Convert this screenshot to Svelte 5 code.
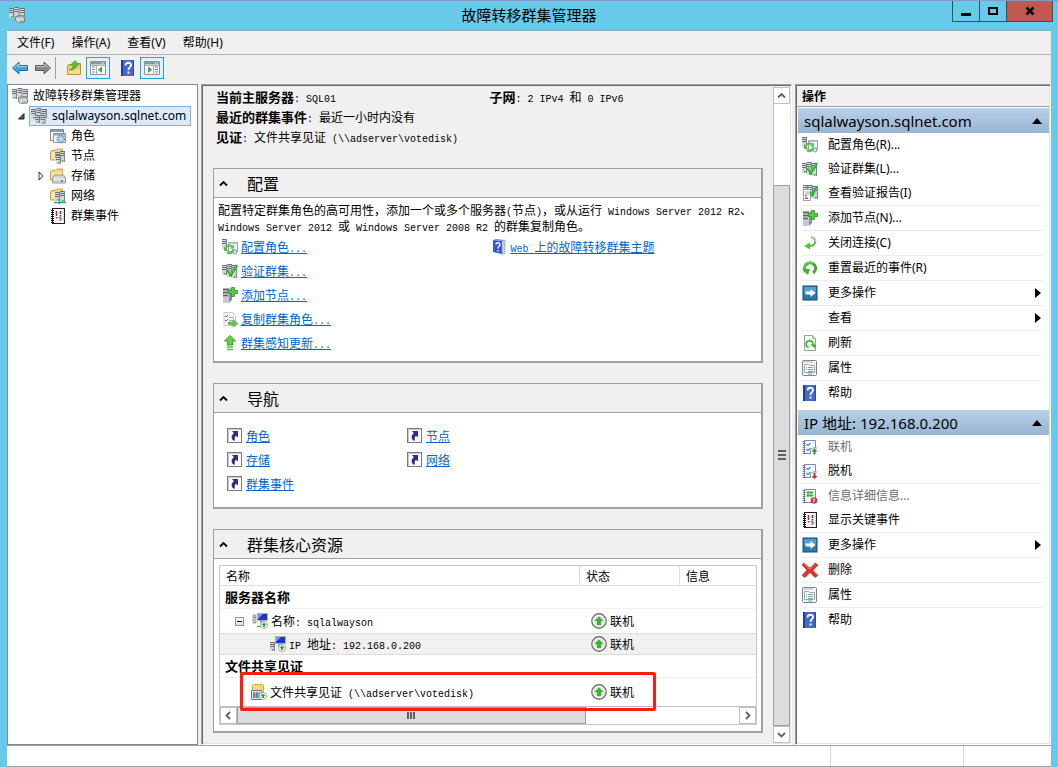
<script>
  const menus = ["文件(F)", "操作(A)", "查看(V)", "帮助(H)"];

  const tree = [
    { label: "角色", icon: "roles" },
    { label: "节点", icon: "nodes" },
    { label: "存储", icon: "storage", closed: true },
    { label: "网络", icon: "networks" },
    { label: "群集事件", icon: "events" },
  ];

  const configLinks = [
    { label: "配置角色...", icon: "configRole" },
    { label: "验证群集...", icon: "validate" },
    { label: "添加节点...", icon: "addNode" },
    { label: "复制群集角色...", icon: "copyRole" },
    { label: "群集感知更新...", icon: "update" },
  ];

  const navLinks = ["角色", "节点", "存储", "网络", "群集事件"];

  const actions = [
    {
      title: "sqlalwayson.sqlnet.com",
      items: [
        { label: "配置角色(R)...", icon: "configRole" },
        { label: "验证群集(L)...", icon: "validate" },
        { label: "查看验证报告(I)", icon: "report", line: true },
        { label: "添加节点(N)...", icon: "addNode", line: true },
        { label: "关闭连接(C)", icon: "disconnect", line: true },
        { label: "重置最近的事件(R)", icon: "reset", line: true },
        { label: "更多操作", icon: "more", line: true, sub: true },
        { label: "查看", icon: "", line: true, sub: true },
        { label: "刷新", icon: "refresh", line: true },
        { label: "属性", icon: "properties", line: true },
        { label: "帮助", icon: "help" },
      ],
    },
    {
      title: "IP 地址: 192.168.0.200",
      items: [
        { label: "联机", icon: "online", disabled: true },
        { label: "脱机", icon: "offline", line: true },
        { label: "信息详细信息...", icon: "details", disabled: true },
        { label: "显示关键事件", icon: "events", line: true },
        { label: "更多操作", icon: "more", line: true, sub: true },
        { label: "删除", icon: "remove", line: true },
        { label: "属性", icon: "properties", line: true },
        { label: "帮助", icon: "help" },
      ],
    },
  ];
</script>

{#snippet mixed(text)}{#each text.split(/([\x20-\x7e]+)/) as part, i}{#if i % 2}<span class="latin">{part}</span>{:else}{part}{/if}{/each}{/snippet}

{#snippet tower(x, y, h)}
  <rect {x} {y} width="5" height={h} fill="#d3d6d8" />
  <path d="M{x + 4} {y}h1v{h}h-1z" fill="#7c8387" />
  <path d="M{x} {y + 0.5}h4M{x} {y + 2.5}h4M{x} {y + 4.5}h4" stroke="#5d656b" stroke-width=".9" />
  <rect x={x + 2} y={y + h - 2} width="1.5" height="1.5" fill="#35b52e" />
{/snippet}

{#snippet badge(x, y, color)}
  <circle cx={x} cy={y} r="3.6" fill="#f4f6f4" stroke="#98a19a" stroke-width=".8" />
  <path d="M{x} {y - 2.6}l2.6 2.6h-1.5v2h-2.2v-2h-1.5z" fill={color} />
{/snippet}

{#snippet icon(name)}
  <svg class="icon" viewBox="0 0 16 16" width="16" height="16" aria-hidden="true">
    {#if name === "cluster" || name === "root"}
      {@render tower(0, 1, 10)}
      {@render tower(5.5, 0, 11)}
      {@render tower(11, 1, 9)}
      {#if name === "root"}
        <path d="M6.500 9.500l6-1 3 2.500v4l-7 .5-2-2z" fill="#b9bfc3" stroke="#646b70" stroke-width=".8" />
        <path d="M7 10.500l2 2 6-1M9 12.500v3" fill="none" stroke="#eef1f2" />
      {:else}
        {@render tower(4, 7, 8)}
        {@render tower(9.5, 7, 9)}
      {/if}
    {:else if name === "roles"}
      <path d="M.5 1.500h13v11H.5z" fill="#f7f9fa" stroke="#7d878f" />
      <path d="M1 2h12v2H1z" fill="#8f9ba5" />
      <path d="M3.500 5.500h12v9h-12z" fill="#eef3f7" stroke="#8d979f" />
      <path d="M4 6h11v1.500H4z" fill="#9aa7b1" />
      <circle cx="11" cy="11" r="3.500" fill="#cfe2f1" stroke="#6c9cc4" stroke-width="2" stroke-dasharray="1.500 .8" />
      <circle cx="11" cy="11" r="1.500" fill="#fff" stroke="#6c9cc4" stroke-width=".7" />
    {:else if name === "nodes" || name === "networks" || name === "storage"}
      <path d="M.5 3.500l1-1H5L6.500 1h6v11H.5z" fill="#f3d77c" stroke="#c9a348" />
      <path d="M1.500 4.500h10v6.500h-10z" fill="#fae9a6" />
      {#if name === "storage"}
        <path d="M2.500 10l2-3h9l2 3v5h-13z" fill="#cfd4d7" stroke="#81898e" stroke-width=".8" />
        <path d="M3 11h12" stroke="#f5f7f8" />
        <rect x="11" y="12" width="2" height="2" fill="#36b52f" />
      {:else}
        {@render tower(5, 4, 9)}
        {@render tower(10, 3, 11)}
        {#if name === "networks"}
          <path d="M4 14.500h12M9.500 13v3" stroke="#2fa39a" stroke-width="1.600" />
        {:else}
          {@render tower(6, 7, 9)}
        {/if}
      {/if}
    {:else if name === "events"}
      <rect x="2.500" y=".5" width="12" height="15" fill="#fff" stroke="#222" />
      <path d="M2.500 2v13" stroke="#111" stroke-width="3" stroke-dasharray="1 1" />
      <path d="M6.500 3v5M6.500 9v1.500" stroke="#dc1d1d" stroke-width="1.600" />
      <path d="M10.500 3v3M10.500 7v1.500" stroke="#263bb8" stroke-width="1.600" />
      <path d="M8.500 10c2.500-1 4 .5 1.500 2v1" fill="none" stroke="#c9366c" stroke-width="1.200" />
      <path d="M13.500 2v12" stroke="#b6b6b6" stroke-dasharray="1 1" />
    {:else if name === "configRole"}
      {@render tower(0, 0, 10)}
      <path d="M6.500 3.500h9v9h-9z" fill="#edf3f5" stroke="#93a2aa" />
      <path d="M6 4h9" stroke="#aab9c0" stroke-width="1.500" />
      <path d="M4 9.500a3.500 3.500 0 0 1 6-2M11 10a3.500 3.500 0 0 1-6 3" fill="none" stroke="#58bd57" stroke-width="2" />
      <path d="M2 7v5h4.500zM12 5.500v4H8z" fill="#58bd57" />
      <circle cx="13" cy="13" r="2" fill="#dbe8f2" stroke="#7597b4" />
    {:else if name === "validate"}
      {@render tower(0, 2, 10)}
      {@render tower(5, 1, 13)}
      {@render tower(10, 2, 13)}
      <path d="M5.500 7l3.500 4.500 6-9.500" fill="none" stroke="#2cae28" stroke-width="2.800" />
      <path d="M6 7l3 3.500L14 3" fill="none" stroke="#8be277" stroke-width=".8" />
    {:else if name === "report"}
      {@render tower(1, 0, 6)}
      {@render tower(6, 0, 12)}
      {@render tower(11, 1, 13)}
      <path d="M1.500 4.500h7v11h-7z" fill="#fff" stroke="#9aa1a5" />
      <path d="M3 7h4M3 9h4" stroke="#9da5aa" />
      <path d="M3 10h1.500v1.500H3zM3 12.500h3V14H3z" fill="#d94836" />
      <path d="M8 7l2.500 3.500L14.500 2" fill="none" stroke="#35b82f" stroke-width="2.200" />
    {:else if name === "addNode"}
      <path d="M1 1h8v13l-3 2H1z" fill="#c6cacd" />
      <path d="M7 3l3-1v11l-3 3z" fill="#8b9297" />
      <path d="M1 2.500h6M1 5.500h6M1 8.500h5" stroke="#5a6369" stroke-width="1.400" />
      <path d="M9.500.5h3v3h3v3h-3v3h-3v-3h-3v-3h3z" fill="#54cf3f" stroke="#25941f" stroke-width=".8" />
    {:else if name === "copyRole"}
      <path d="M2 1.500h8.500l3 3v10H2z" fill="#f8fafb" stroke="#c6ccd0" />
      <path d="M3 5l1 1 2-2M3 9l1 1 2-2" fill="none" stroke="#316dbd" />
      <path d="M7 6.500h5M7 9.500h4" stroke="#a9b3bb" />
      <path d="M6.500 11h4.500V8.500l5 4-5 3.500v-2.500H6.500z" fill="#5fc84c" stroke="#379c2f" stroke-width=".5" />
    {:else if name === "update"}
      <path d="M8 .5L13.500 6H10.500v4H5.500V6H2.500z" fill="#65ce46" stroke="#399e2b" />
      <path d="M5 12h6M5 14.500h6" stroke="#58bd3e" stroke-width="1.500" />
    {:else if name === "disconnect"}
      <path d="M9 2c6 1 6 9-2 9" fill="none" stroke="#52bf39" stroke-width="2" />
      <path d="M2 11l6-3.500v7z" fill="#4fc538" />
      <path d="M9 2c3 0 5 2 4.500 5" fill="none" stroke="#b4eba5" />
    {:else if name === "reset"}
      <path d="M4 12A5.500 5.500 0 1 1 11 13" fill="none" stroke="#3eab31" stroke-width="3" />
      <path d="M3 8.500A5 5 0 0 1 11 3.500" fill="none" stroke="#93dc78" />
      <path d="M0 9h8l-2 6z" fill="#43b134" />
    {:else if name === "more"}
      <rect x="1" y="1" width="14" height="14" fill="#2b79ae" stroke="#164b78" />
      <path d="M2 2h12v5.500H2z" fill="#51a0cf" />
      <path d="M3.500 6.500h5V4l5 4-5 4V9.500h-5z" fill="#fff" />
    {:else if name === "refresh"}
      <path d="M2.500.5h8l3 3v12h-11z" fill="#f8faf8" stroke="#999f9a" />
      <path d="M10.500.5v3h3" fill="#d9dddb" stroke="#a8aeaa" />
      <path d="M6.500 12.500A3.500 3.500 0 1 1 11 10" fill="none" stroke="#4eb83d" stroke-width="2" />
      <path d="M8 9.500h5.500v4z" fill="#43ad34" />
    {:else if name === "properties"}
      <rect x=".5" y=".5" width="14" height="15" rx="1" fill="#f3f5f7" stroke="#7d858c" />
      <path d="M1 2h10" stroke="#b6bdc3" />
      <path d="M2.500 4.500h4l1 1h5v7h-10z" fill="#fff" stroke="#9ca6ae" />
      <path d="M6 7.500h5M6 9.500h5M6 11.500h5" stroke="#8d99a3" />
      <path d="M4 7.500h1M4 9.500h1M6 14h4" stroke="#3fb6df" />
    {:else if name === "help"}
      <path d="M1 0h13v16H1z" fill="#4668c8" />
      <path d="M1 0h2v16H1z" fill="#243e91" />
      <path d="M13.500 0v16" stroke="#2d489d" />
      <path d="M5.500 5.500c.3-3.700 5.500-3.500 5.500-.5C11 7.300 8.500 7 8.500 10" fill="none" stroke="#fff" stroke-width="1.800" />
      <rect x="7.500" y="11.500" width="2" height="2" fill="#fff" />
    {:else if name === "web"}
      <path d="M1 1l9 1v13l-9-2z" fill="#3158ce" />
      <path d="M10 2l3-1v13l-3 1.500z" fill="#cbd4ee" stroke="#8092c5" stroke-width=".6" />
      <path d="M1 1l3-1 9 1-3 1z" fill="#6e8ee5" />
      <path d="M4 5.500c0-2.500 4-2 4 0C8 7.500 6 7 6 9.500M6 11v1.500" fill="none" stroke="#fff" stroke-width="1.400" />
    {:else if name === "online" || name === "offline" || name === "details"}
      <path d="M2.500 1.500h11v13h-11z" fill="#f9fafc" stroke="#7788ae" />
      <path d="M2 2v13" stroke="#68717c" stroke-width="2.500" stroke-dasharray="1 1" />
      {#if name === "details"}
        <path d="M6 3v6M9 3v6M4.500 4.500h7M4.500 7.500h7" stroke="#3bb33a" stroke-width="1.300" />
        <circle cx="12" cy="12.500" r="3.300" fill="#cb3637" />
        <path d="M12 10.500v2.500M12 13.500v1" stroke="#fff" stroke-width="1.300" />
      {:else}
        <path d="M4.500 5L6 6.500 8.500 4M4.500 10L6 11.500 8.500 9" fill="none" stroke="#4e94c9" stroke-width="1.300" />
        <path d="M9 9h7v7H9z" fill="#fff" />
        <path d="M8.500 15v-4l2-2H15" fill="none" stroke="#8d969c" />
        {#if name === "online"}
          <path d="M12.500 9.500l3 3h-2v3h-2v-3h-2z" fill="#26902c" />
        {:else}
          <path d="M12.500 16l3-3h-2v-3h-2v3h-2z" fill="#d02424" />
        {/if}
      {/if}
    {:else if name === "remove"}
      <path d="M2 1l6 5 5-5 3 2-5 5.500 5 5-3 2-5-5-5 5-3-2 5-5.500L0 3z" fill="#d9372e" stroke="#b8261f" stroke-width=".6" />
      <path d="M2 2l6 5 5-5" fill="none" stroke="#f4887d" />
    {:else if name === "shortcut"}
      <rect x=".5" y=".5" width="14" height="14" fill="#fff" stroke="#7c7c7c" />
      <path d="M1.500 14V1.500H14" fill="none" stroke="#c9c9d4" />
      <path d="M5 3h6v6.500L9.300 8C7.500 8.500 7.500 10 8 12.500H6C3.800 9.500 4.500 7 6.800 5.300z" fill="#352d8e" />
    {:else if name === "name" || name === "ip"}
      {#if name === "ip"}
        {@render tower(0, 6, 9)}
      {:else}
        <rect x="1" y="2" width="3" height="8" fill="#c0c6ca" stroke="#80888d" stroke-width=".7" />
        <rect x="2" y="4" width="2" height="1" fill="#4caf48" />
        <path d="M5 13.500h6" stroke="#697177" />
      {/if}
      <path d="M5.500.5h10v7h-10z" fill="#1c36c8" stroke="#a9b3bd" />
      <path d="M6 1h5L6 6z" fill="#7895f2" />
      <path d="M8 8h4v3H8z" fill="#9aa2a8" />
      {@render badge(12, 12, "#3aaa35")}
    {:else if name === "share"}
      <path d="M1.500 1.500l1-1h9l1 1v11h-11z" fill="#f6da79" stroke="#d0ad4a" />
      <path d="M.5 6.500h10v9H.5z" fill="#e7edf0" stroke="#68747c" />
      <path d="M2 8.500h7v5.500H2z" fill="#9fb4bd" />
      <path d="M2 9h7M2 11h7M2 13h7" stroke="#2f5f78" stroke-dasharray="2 1" />
      {@render badge(12, 12, "#3aaa35")}
    {:else if name === "up"}
      <circle cx="8" cy="8" r="7.200" fill="#dfe1df" stroke="#747874" stroke-width="1.400" />
      <circle cx="8" cy="8" r="5.700" fill="none" stroke="#fff" />
      <path d="M8 3.500L12.500 8H10v4H6V8H3.500z" fill="#37b52b" />
    {:else if name === "back" || name === "forward"}
      {#if name === "back"}
        <path d="M.5 8L7 2v3.500h8.500v5H7V14z" fill="#39a5e4" stroke="#176ca9" />
        <path d="M2 8l4.500-4v2.500H15" fill="none" stroke="#a5dbf7" />
      {:else}
        <path d="M15.500 8L9 2v3.500H.5v5H9V14z" fill="#898989" stroke="#5b5b5b" />
        <path d="M1 6.500h9V4l4 4" fill="none" stroke="#c0c0c0" />
      {/if}
    {:else if name === "folderUp"}
      <path d="M1.500 5.500l1-1H8l1-1h5.500v11h-13z" fill="#edc865" stroke="#bd923d" />
      <path d="M2 9h12v5H2z" fill="#f6dc8c" />
      <path d="M3 10c4-1 4-3 4-5H4.500L9 .5 13 5h-2.500c0 3-3 5.500-7.500 5z" fill="#5cbd3d" stroke="#358e27" stroke-width=".6" />
    {:else if name === "paneLeft" || name === "paneRight"}
      <path d="M.5 1.500h15v13H.5z" fill="#fff" stroke="#8b949b" />
      <path d="M1 2h14v2.500H1z" fill="#8b969e" />
      <path d="M11 3h1M13 3h1" stroke="#fff" />
      {#if name === "paneLeft"}
        <path d="M2 7h3M2 9.500h3M2 12h3" stroke="#6583a3" />
        <path d="M6.500 5v9M1 5.500h14" stroke="#a9b2b8" />
        <path d="M12 6.500v6.500L8 9.800z" fill="#38a932" />
      {:else}
        <path d="M11 7h3M11 9.500h3M11 12h3" stroke="#6583a3" />
        <path d="M9.500 5v9M1 5.500h14" stroke="#a9b2b8" />
        <path d="M4 6.500v6.500l4-3.200z" fill="#38a932" />
      {/if}
    {/if}
  </svg>
{/snippet}

{#snippet chevron(d)}
  <svg viewBox="0 0 9 9" width="9" height="9" aria-hidden="true"><path {d} fill="none" stroke="currentColor" stroke-width="1.800" /></svg>
{/snippet}

{#snippet sectionHead(title)}
  <h2>
    <button aria-expanded="true">{@render chevron("M1 6.500L4.500 3 8 6.500")}{title}</button>
  </h2>
{/snippet}

<div class="window">
  <header class="titlebar">
    <div class="app-icon">{@render icon("root")}</div>
    <h1>故障转移群集管理器</h1>
    <div class="window-buttons">
      <button aria-label="最小化"><svg viewBox="0 0 12 12" width="12" height="12"><path d="M1 8h10v3H1z" /></svg></button>
      <button aria-label="最大化"><svg viewBox="0 0 12 12" width="12" height="12"><path d="M2 3h8v6H2z" fill="none" stroke="#000" stroke-width="2" /></svg></button>
      <button class="close" aria-label="关闭"><svg viewBox="0 0 12 12" width="12" height="12"><path d="M2.500 2.500l7 7M9.500 2.500l-7 7" stroke="#000" stroke-width="2.500" /></svg></button>
    </div>
  </header>

  <div class="client">
    <nav class="menubar">
      {#each menus as menu}
        <button>{menu}</button>
      {/each}
    </nav>

    <div class="toolbar">
      <button aria-label="后退">{@render icon("back")}</button>
      <button aria-label="前进">{@render icon("forward")}</button>
      <span class="divider"></span>
      <button aria-label="上一级">{@render icon("folderUp")}</button>
      <button class="pressed" aria-label="显示控制台树">{@render icon("paneLeft")}</button>
      <button class="spaced" aria-label="帮助">{@render icon("help")}</button>
      <button class="pressed" aria-label="显示操作窗格">{@render icon("paneRight")}</button>
    </div>

    <div class="panes">
      <nav class="tree">
        <button class="node root">{@render icon("root")}故障转移群集管理器</button>
        <div class="branch">
          <span class="twisty"><svg viewBox="0 0 8 8" width="8" height="8"><path d="M7 1.500v5.500H1.500z" fill="#555" stroke="#222" /></svg></span>
          <button class="node selected">{@render icon("cluster")}sqlalwayson.sqlnet.com</button>
        </div>
        {#each tree as item}
          <div class="branch leaf">
            <span class="twisty">
              {#if item.closed}
                <svg viewBox="0 0 8 10" width="8" height="10"><path d="M2 1l4 4-4 4z" fill="#fff" stroke="#333" /></svg>
              {/if}
            </span>
            <button class="node">{@render icon(item.icon)}{item.label}</button>
          </div>
        {/each}
      </nav>

      <main class="details sunken">
        <div class="content">
          <div class="summary">
            <p><b>当前主服务器</b>{@render mixed(": SQL01")}</p>
            <p><b>子网</b>{@render mixed(": 2 IPv4 和 0 IPv6")}</p>
            <p class="wide"><b>最近的群集事件</b>{@render mixed(": 最近一小时内没有")}</p>
            <p class="wide"><b>见证</b>{@render mixed(": 文件共享见证 (\\\\adserver\\votedisk)")}</p>
          </div>

          <section>
            {@render sectionHead("配置")}
            <div class="config">
              <p>
                {@render mixed("配置特定群集角色的高可用性，添加一个或多个服务器(节点)，或从运行 Windows Server 2012 R2、")}<br />
                {@render mixed("Windows Server 2012 或 Windows Server 2008 R2 的群集复制角色。")}
              </p>
              <div class="columns">
                <ul>
                  {#each configLinks as link}
                    <li>{@render icon(link.icon)}<a href="#config">{@render mixed(link.label)}</a></li>
                  {/each}
                </ul>
                <ul>
                  <li>{@render icon("web")}<a href="#web">{@render mixed("Web 上的故障转移群集主题")}</a></li>
                </ul>
              </div>
            </div>
          </section>

          <section>
            {@render sectionHead("导航")}
            <ul class="navigate">
              {#each navLinks as link}
                <li>{@render icon("shortcut")}<a href="#nav">{link}</a></li>
              {/each}
            </ul>
          </section>

          <section>
            {@render sectionHead("群集核心资源")}
            <div class="resources">
              <table>
                <colgroup>
                  <col />
                  <col class="status-col" />
                  <col class="info-col" />
                </colgroup>
                <thead>
                  <tr><th>名称</th><th>状态</th><th>信息</th></tr>
                </thead>
                <tbody>
                  <tr class="group"><th colspan="3">服务器名称</th></tr>
                  <tr class="resource">
                    <td>
                      <div class="cell level-1">
                        <button class="collapse" aria-label="折叠"></button>
                        {@render icon("name")}<span>{@render mixed("名称: sqlalwayson")}</span>
                      </div>
                    </td>
                    <td><div class="cell">{@render icon("up")}联机</div></td>
                    <td></td>
                  </tr>
                  <tr class="resource current">
                    <td><div class="cell level-2">{@render icon("ip")}<span>{@render mixed("IP 地址: 192.168.0.200")}</span></div></td>
                    <td><div class="cell">{@render icon("up")}联机</div></td>
                    <td></td>
                  </tr>
                  <tr class="group"><th colspan="3">文件共享见证</th></tr>
                  <tr class="resource witness">
                    <td><div class="cell level-share">{@render icon("share")}<span>{@render mixed("文件共享见证 (\\\\adserver\\votedisk)")}</span></div></td>
                    <td><div class="cell">{@render icon("up")}联机</div></td>
                    <td></td>
                  </tr>
                </tbody>
              </table>
              <div class="hscroll">
                <span class="arrow">{@render chevron("M6 1L2.500 4.500 6 8")}</span>
                <span class="thumb"><i class="grip"></i></span>
                <span class="track"></span>
                <span class="arrow">{@render chevron("M3 1l3.500 3.500L3 8")}</span>
              </div>
              <div class="highlight"></div>
            </div>
          </section>
        </div>

        <div class="vscroll">
          <span class="arrow">{@render chevron("M1 6.500L4.500 3 8 6.500")}</span>
          <span class="track"></span>
          <span class="thumb"><i class="grip"></i></span>
          <span class="arrow">{@render chevron("M1 3l3.500 3.500L8 3")}</span>
        </div>
      </main>

      <aside class="actions sunken">
        <h2>操作</h2>
        {#each actions as group}
          <h3>
            <button aria-expanded="true">
              {group.title}
              <svg viewBox="0 0 10 6" width="10" height="6"><path d="M5 0l5 6H0z" /></svg>
            </button>
          </h3>
          <ul>
            {#each group.items as item}
              <li class:line={item.line}>
                <button disabled={item.disabled}>
                  {@render icon(item.icon)}
                  <span>{item.label}</span>
                  {#if item.sub}
                    <svg viewBox="0 0 6 10" width="6" height="10"><path d="M0 0l6 5-6 5z" /></svg>
                  {/if}
                </button>
              </li>
            {/each}
          </ul>
        {/each}
      </aside>
    </div>

    <footer class="statusbar"><span></span><span></span><span></span></footer>
  </div>
</div>

<style>
  :global(body) {
    margin: 0;
  }

  .window,
  .window * {
    box-sizing: border-box;
  }

  .window {
    display: flex;
    flex-direction: column;
    min-height: 100vh;
    padding: 0 7px;
    border-top: 1px solid #7f9dc4;
    background: #67caea;
    color: #000;
    font-family: "Noto Sans", "Noto Sans CJK SC", sans-serif;
    font-size: 12px;
    line-height: 20px;
  }

  h1,
  h2,
  h3,
  p,
  ul {
    margin: 0;
    padding: 0;
    font-weight: normal;
    list-style: none;
  }

  button {
    display: flex;
    align-items: center;
    margin: 0;
    padding: 0;
    border: none;
    background: none;
    color: inherit;
    font: inherit;
    text-align: left;
    white-space: nowrap;
  }

  svg {
    display: block;
    flex: none;
  }

  .titlebar {
    display: grid;
    grid-template-columns: 1fr auto 1fr;
    height: 29px;
  }

  .app-icon {
    padding: 6px 2px;
  }

  .titlebar h1 {
    font-size: 15px;
    line-height: 28px;
  }

  .window-buttons {
    display: flex;
    justify-content: flex-end;
    height: 21px;
    margin-right: -2px;
  }

  .window-buttons button {
    justify-content: center;
    width: 27px;
    border: 1px solid #31525e;
    border-top: none;
    border-right: none;
  }

  .window-buttons .close {
    width: 47px;
    border-right: 1px solid #31525e;
    background: #c15850;
  }

  .client {
    display: flex;
    flex: 1;
    flex-direction: column;
    border-top: 1px solid #8aa9b8;
    background: #f0f0f0;
  }

  .menubar {
    display: flex;
    gap: 17px;
    height: 24px;
    padding: 0 10px;
    border-bottom: 1px solid #b0b0b0;
  }

  .toolbar {
    display: flex;
    align-items: center;
    gap: 1px;
    height: 29px;
    padding: 0 2px 4px;
  }

  .toolbar button {
    justify-content: center;
    width: 22px;
    height: 22px;
  }

  .toolbar .divider {
    height: 22px;
    margin-right: 6px;
    border-left: 1px solid #a0a0a0;
  }

  .toolbar .pressed {
    width: 24px;
    border: 1px solid #26a0da;
    background: #e4f1fa;
  }

  .toolbar .spaced {
    margin-left: 6px;
  }

  .panes {
    display: grid;
    flex: 1;
    grid-template-columns: 191px minmax(0, 1fr) 256px;
    gap: 3px;
  }

  .tree {
    padding: 1px 4px;
    border: 1px solid #828790;
    background: #fff;
  }

  .node {
    gap: 5px;
    height: 20px;
    border: 1px solid transparent;
  }

  .node.root {
    border: none;
  }

  .branch {
    display: flex;
    align-items: center;
  }

  .twisty {
    display: flex;
    justify-content: center;
    width: 17px;
  }

  .node.selected {
    padding: 0 4px 0 1px;
    border-color: #84acdd;
    background: #dcebfc;
  }

  .leaf {
    padding-left: 20px;
  }

  .sunken {
    border: 1px solid #a0a0a0;
    border-right-color: #fff;
    border-bottom-color: #fff;
    box-shadow: inset 1px 1px #696969, inset -1px -1px #e3e3e3;
  }

  .details {
    display: flex;
    padding: 2px 1px 1px 2px;
    font-family: "Noto Sans CJK SC", sans-serif;
  }

  /* half-width letters next to 12px ideographs */
  .latin {
    font-family: "Liberation Mono", monospace;
    font-size: 10px;
    line-height: 0;
    white-space: pre;
  }

  .content {
    display: flex;
    flex: 1;
    flex-direction: column;
    gap: 20px;
    min-width: 0;
    padding: 0 10px 8px 9px;
  }

  .summary {
    display: grid;
    grid-template-columns: 1fr 1fr;
    padding: 0 0 1px 3px;
  }

  .summary .wide {
    grid-column: 1 / -1;
  }

  .summary b {
    font-size: 13px;
    line-height: 0;
  }

  section {
    border: 1px solid #a0a0a0;
    border-right-width: 2px;
    border-bottom-width: 2px;
    background: #fff;
  }

  section h2 {
    height: 29px;
    border-bottom: 1px solid #a0a0a0;
    background: #f0f0f0;
    font-size: 16px;
  }

  section h2 button {
    gap: 19px;
    width: 100%;
    height: 28px;
    padding-left: 5px;
  }

  .config {
    padding: 4px 4px 6px;
  }

  .config p {
    margin-bottom: 1px;
    line-height: 16px;
    white-space: nowrap;
  }

  .columns {
    display: grid;
    grid-template-columns: 1fr 1fr;
  }

  section li {
    display: flex;
    align-items: center;
    gap: 3px;
    height: 24px;
    padding-left: 4px;
  }

  a {
    color: #0066cc;
    text-decoration: underline;
  }

  .navigate {
    display: grid;
    grid-template-columns: 180px 180px;
    padding: 11px 9px;
  }

  .resources {
    position: relative;
    margin: 6px 4px 6px 5px;
    border: 1px solid #c8c8c8;
  }

  table {
    width: 100%;
    table-layout: fixed;
    border-collapse: separate;
    border-spacing: 0;
  }

  .status-col {
    width: 100px;
  }

  .info-col {
    width: 76px;
  }

  th,
  td {
    padding: 0;
    text-align: left;
  }

  thead th {
    height: 20px;
    padding-left: 6px;
    border-right: 1px solid #dedede;
    border-bottom: 1px solid #dedede;
    font-weight: normal;
    line-height: 19px;
  }

  thead th:last-child {
    border-right: none;
  }

  .group th {
    height: 23px;
    padding-left: 5px;
    border-bottom: 1px solid #f0f0f0;
    font-size: 13px;
    line-height: 22px;
  }

  .resource td {
    height: 24px;
  }

  .resource.current td {
    height: 22px;
    border-top: 1px solid #dcdcdc;
    border-bottom: 1px solid #dcdcdc;
    background: #f1f1f1;
  }

  .resource.witness td {
    height: 28px;
  }

  .cell {
    display: flex;
    align-items: center;
    gap: 3px;
    height: 20px;
    padding-left: 11px;
    white-space: nowrap;
  }

  .level-1 {
    padding-left: 15px;
  }

  .level-2 {
    padding-left: 50px;
  }

  .level-share {
    padding-left: 31px;
  }

  .collapse {
    justify-content: center;
    width: 9px;
    height: 9px;
    margin-right: 5px;
    border: 1px solid #8496a8;
    background: linear-gradient(#fff, #dde3ea);
  }

  .collapse::before {
    content: "";
    width: 5px;
    height: 1px;
    background: #000;
  }

  .hscroll,
  .vscroll {
    display: flex;
    background: #fff;
    color: #606060;
  }

  .hscroll {
    height: 18px;
    border-top: 1px solid #c0c0c0;
  }

  .arrow {
    display: flex;
    flex: none;
    align-items: center;
    justify-content: center;
    width: 17px;
    height: 17px;
    border: 1px solid #c0c0c0;
    background: #fff;
  }

  .thumb {
    display: flex;
    align-items: center;
    justify-content: center;
    border: 1px solid #a0a0a0;
    background: #dcdcdc;
  }

  .hscroll .thumb {
    flex: 348;
  }

  .hscroll .track {
    flex: 154;
  }

  .grip {
    width: 8px;
    height: 7px;
    background: repeating-linear-gradient(90deg, #606060 0 2px, #dcdcdc 2px 3px);
  }

  .highlight {
    position: absolute;
    top: 106px;
    right: 100px;
    bottom: 13px;
    left: 20px;
    border: 3px solid #ff1c12;
    border-radius: 2px;
  }

  .vscroll {
    flex: none;
    flex-direction: column;
    width: 17px;
  }

  .vscroll .track {
    flex: 81;
    border-left: 1px solid #c0c0c0;
  }

  .vscroll .thumb {
    flex: 541;
  }

  .vscroll .grip {
    height: 10px;
    background: repeating-linear-gradient(#606060 0 2px, #dcdcdc 2px 4px);
  }

  .actions {
    padding: 2px 1px 1px;
    background: #fff;
  }

  .actions h2 {
    height: 20px;
    padding-left: 5px;
    border-bottom: 1px solid #a0a0a0;
    background: #f0f0f0;
    font-size: 12px;
    font-weight: bold;
  }

  .actions h3 {
    margin: 1px 0 0 1px;
    background: linear-gradient(#b9d1ea, #99b4d1);
    font-size: 15px;
  }

  .actions h3 button {
    justify-content: space-between;
    width: 100%;
    height: 25px;
    padding: 0 7px 0 6px;
  }

  .actions ul {
    padding: 0 6px 4px 5px;
  }

  .actions li.line {
    border-bottom: 1px solid #ededed;
  }

  .actions li button {
    gap: 10px;
    width: 100%;
    height: 24px;
    padding-right: 2px;
  }

  .actions li span {
    flex: 1;
  }

  .actions li button:disabled {
    color: #6d6d6d;
  }

  .statusbar {
    display: grid;
    grid-template-columns: 1fr 133px 88px;
    height: 22px;
    border-top: 1px solid #a0a0a0;
    border-bottom: 1px solid #a0a0a0;
    background: #fff;
  }

  .statusbar span + span {
    border-left: 1px solid #d7d7d7;
  }
</style>
